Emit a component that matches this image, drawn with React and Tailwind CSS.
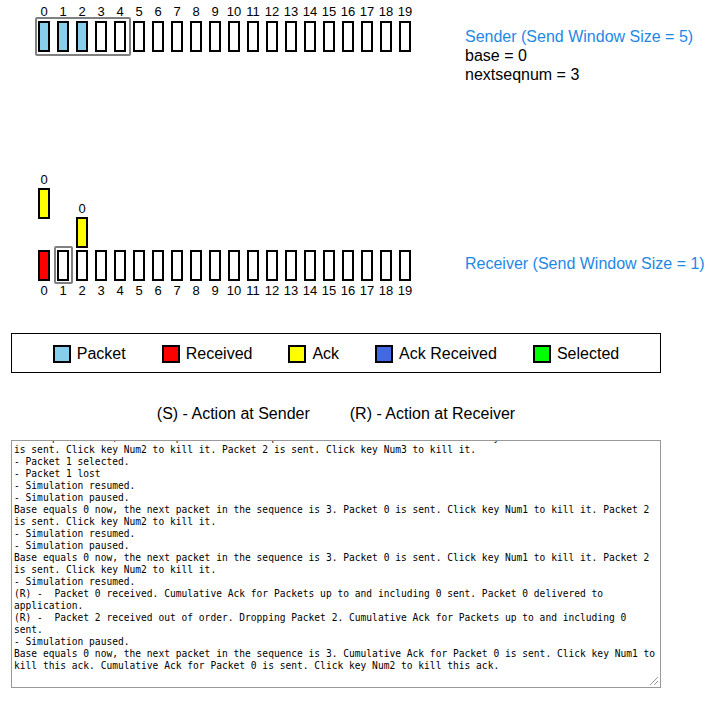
const SANS = { fontFamily: '"Liberation Sans", Arial, sans-serif' };
const MONO = { fontFamily: '"DejaVu Sans Mono", monospace' };

const NUMS = Array.from({ length: 20 }, (_, i) => i);

const LEGEND = [
  { label: 'Packet', color: 'bg-[#87ceeb]' },
  { label: 'Received', color: 'bg-[#ff0000]' },
  { label: 'Ack', color: 'bg-[#ffff00]' },
  { label: 'Ack Received', color: 'bg-[#4169e1]' },
  { label: 'Selected', color: 'bg-[#00ff00]' },
];

const LOG = [
  'Base equals 0 now, the next packet in the sequence is 3. Packet 0 is sent. Click key Num1 to kill it. Packet 1',
  'is sent. Click key Num2 to kill it. Packet 2 is sent. Click key Num3 to kill it.',
  '- Packet 1 selected.',
  '- Packet 1 lost',
  '- Simulation resumed.',
  '- Simulation paused.',
  'Base equals 0 now, the next packet in the sequence is 3. Packet 0 is sent. Click key Num1 to kill it. Packet 2',
  'is sent. Click key Num2 to kill it.',
  '- Simulation resumed.',
  '- Simulation paused.',
  'Base equals 0 now, the next packet in the sequence is 3. Packet 0 is sent. Click key Num1 to kill it. Packet 2',
  'is sent. Click key Num2 to kill it.',
  '- Simulation resumed.',
  '(R) -  Packet 0 received. Cumulative Ack for Packets up to and including 0 sent. Packet 0 delivered to',
  'application.',
  '(R) -  Packet 2 received out of order. Dropping Packet 2. Cumulative Ack for Packets up to and including 0',
  'sent.',
  '- Simulation paused.',
  'Base equals 0 now, the next packet in the sequence is 3. Cumulative Ack for Packet 0 is sent. Click key Num1 to',
  'kill this ack. Cumulative Ack for Packet 0 is sent. Click key Num2 to kill this ack.',
];

function NumberRow() {
  return (
    <div className="flex gap-[7px] h-[14px]">
      {NUMS.map((n) => (
        <div key={n} className="w-[12px] flex justify-center whitespace-nowrap text-[13px] leading-[14px] text-black">
          {n}
        </div>
      ))}
    </div>
  );
}

function PacketRow({ fills }) {
  return (
    <div className="flex gap-[7px]">
      {NUMS.map((n) => (
        <div key={n} className={`w-[12px] h-[31px] border-2 border-black ${fills[n] || 'bg-white'}`} />
      ))}
    </div>
  );
}

function Ack({ left, top }) {
  return (
    <div className="absolute flex flex-col items-center w-[12px]" style={{ left, top }}>
      <div className="text-[13px] leading-[14px] text-black">0</div>
      <div className="w-[12px] h-[31px] mt-[1px] border-2 border-black bg-[#ffff00]" />
    </div>
  );
}

export default function App() {
  return (
    <div className="w-[711px] h-[711px] bg-white overflow-hidden" style={SANS}>
      {/* sender */}
      <div className="flex h-[165px]">
        <div className="relative w-[465px] pl-[38px] pt-[5px]">
          <NumberRow />
          <div className="mt-[2px]">
            <PacketRow fills={{ 0: 'bg-[#87ceeb]', 1: 'bg-[#87ceeb]', 2: 'bg-[#87ceeb]' }} />
          </div>
          <div className="absolute left-[35px] top-[17px] w-[96px] h-[39px] border-2 border-[#808080] rounded-[2px]" />
        </div>
        <div className="pt-[27px] text-[16px] leading-[19px] text-black">
          <div className="text-[#1e88e5]">Sender (Send Window Size = 5)</div>
          <div>base = 0</div>
          <div>nextseqnum = 3</div>
        </div>
      </div>

      {/* receiver */}
      <div className="flex">
        <div className="relative w-[465px] pl-[38px] pt-[85px]">
          <Ack left={38} top={8} />
          <Ack left={76} top={37} />
          <PacketRow fills={{ 0: 'bg-[#ff0000]' }} />
          <div className="mt-[3px]">
            <NumberRow />
          </div>
          <div className="absolute left-[54px] top-[81px] w-[19px] h-[38px] border-2 border-[#808080] rounded-[2px]" />
        </div>
        <div className="pt-[90px] text-[16px] leading-[18.5px] text-[#1e88e5] whitespace-nowrap">
          Receiver (Send Window Size = 1)
        </div>
      </div>

      {/* legend */}
      <div className="mt-[35px] ml-[11px] w-[650px] h-[40px] pt-[2px] border border-black flex items-center justify-center gap-[36px]">
        {LEGEND.map((l) => (
          <div key={l.label} className="flex items-center gap-[6px]">
            <div className={`w-[18px] h-[18px] -mt-[1px] border-2 border-black ${l.color}`} />
            <span className="text-[16px] leading-[18px] text-black">{l.label}</span>
          </div>
        ))}
      </div>

      {/* captions */}
      <div className="mt-[32px] ml-[11px] w-[650px] flex justify-center gap-[40px] text-[16px] leading-[18px] text-black">
        <span>(S) - Action at Sender</span>
        <span>(R) - Action at Receiver</span>
      </div>

      {/* log */}
      <div className="relative mt-[17px] ml-[11px] w-[650px] h-[248px] border border-[#999999] bg-white overflow-hidden">
        <div className="-mt-[9px] px-[2px] text-[9.6px] leading-[12px] text-black whitespace-pre" style={MONO}>
          {LOG.map((line, i) => (
            <div key={i} className="h-[12px]">{line}</div>
          ))}
        </div>
        <svg className="absolute right-[1px] bottom-[1px]" width="11" height="11" viewBox="0 0 11 11">
          <line x1="10" y1="2" x2="2" y2="10" stroke="#9a9a9a" strokeWidth="1" />
          <line x1="10" y1="6" x2="6" y2="10" stroke="#9a9a9a" strokeWidth="1" />
        </svg>
      </div>
    </div>
  );
}
